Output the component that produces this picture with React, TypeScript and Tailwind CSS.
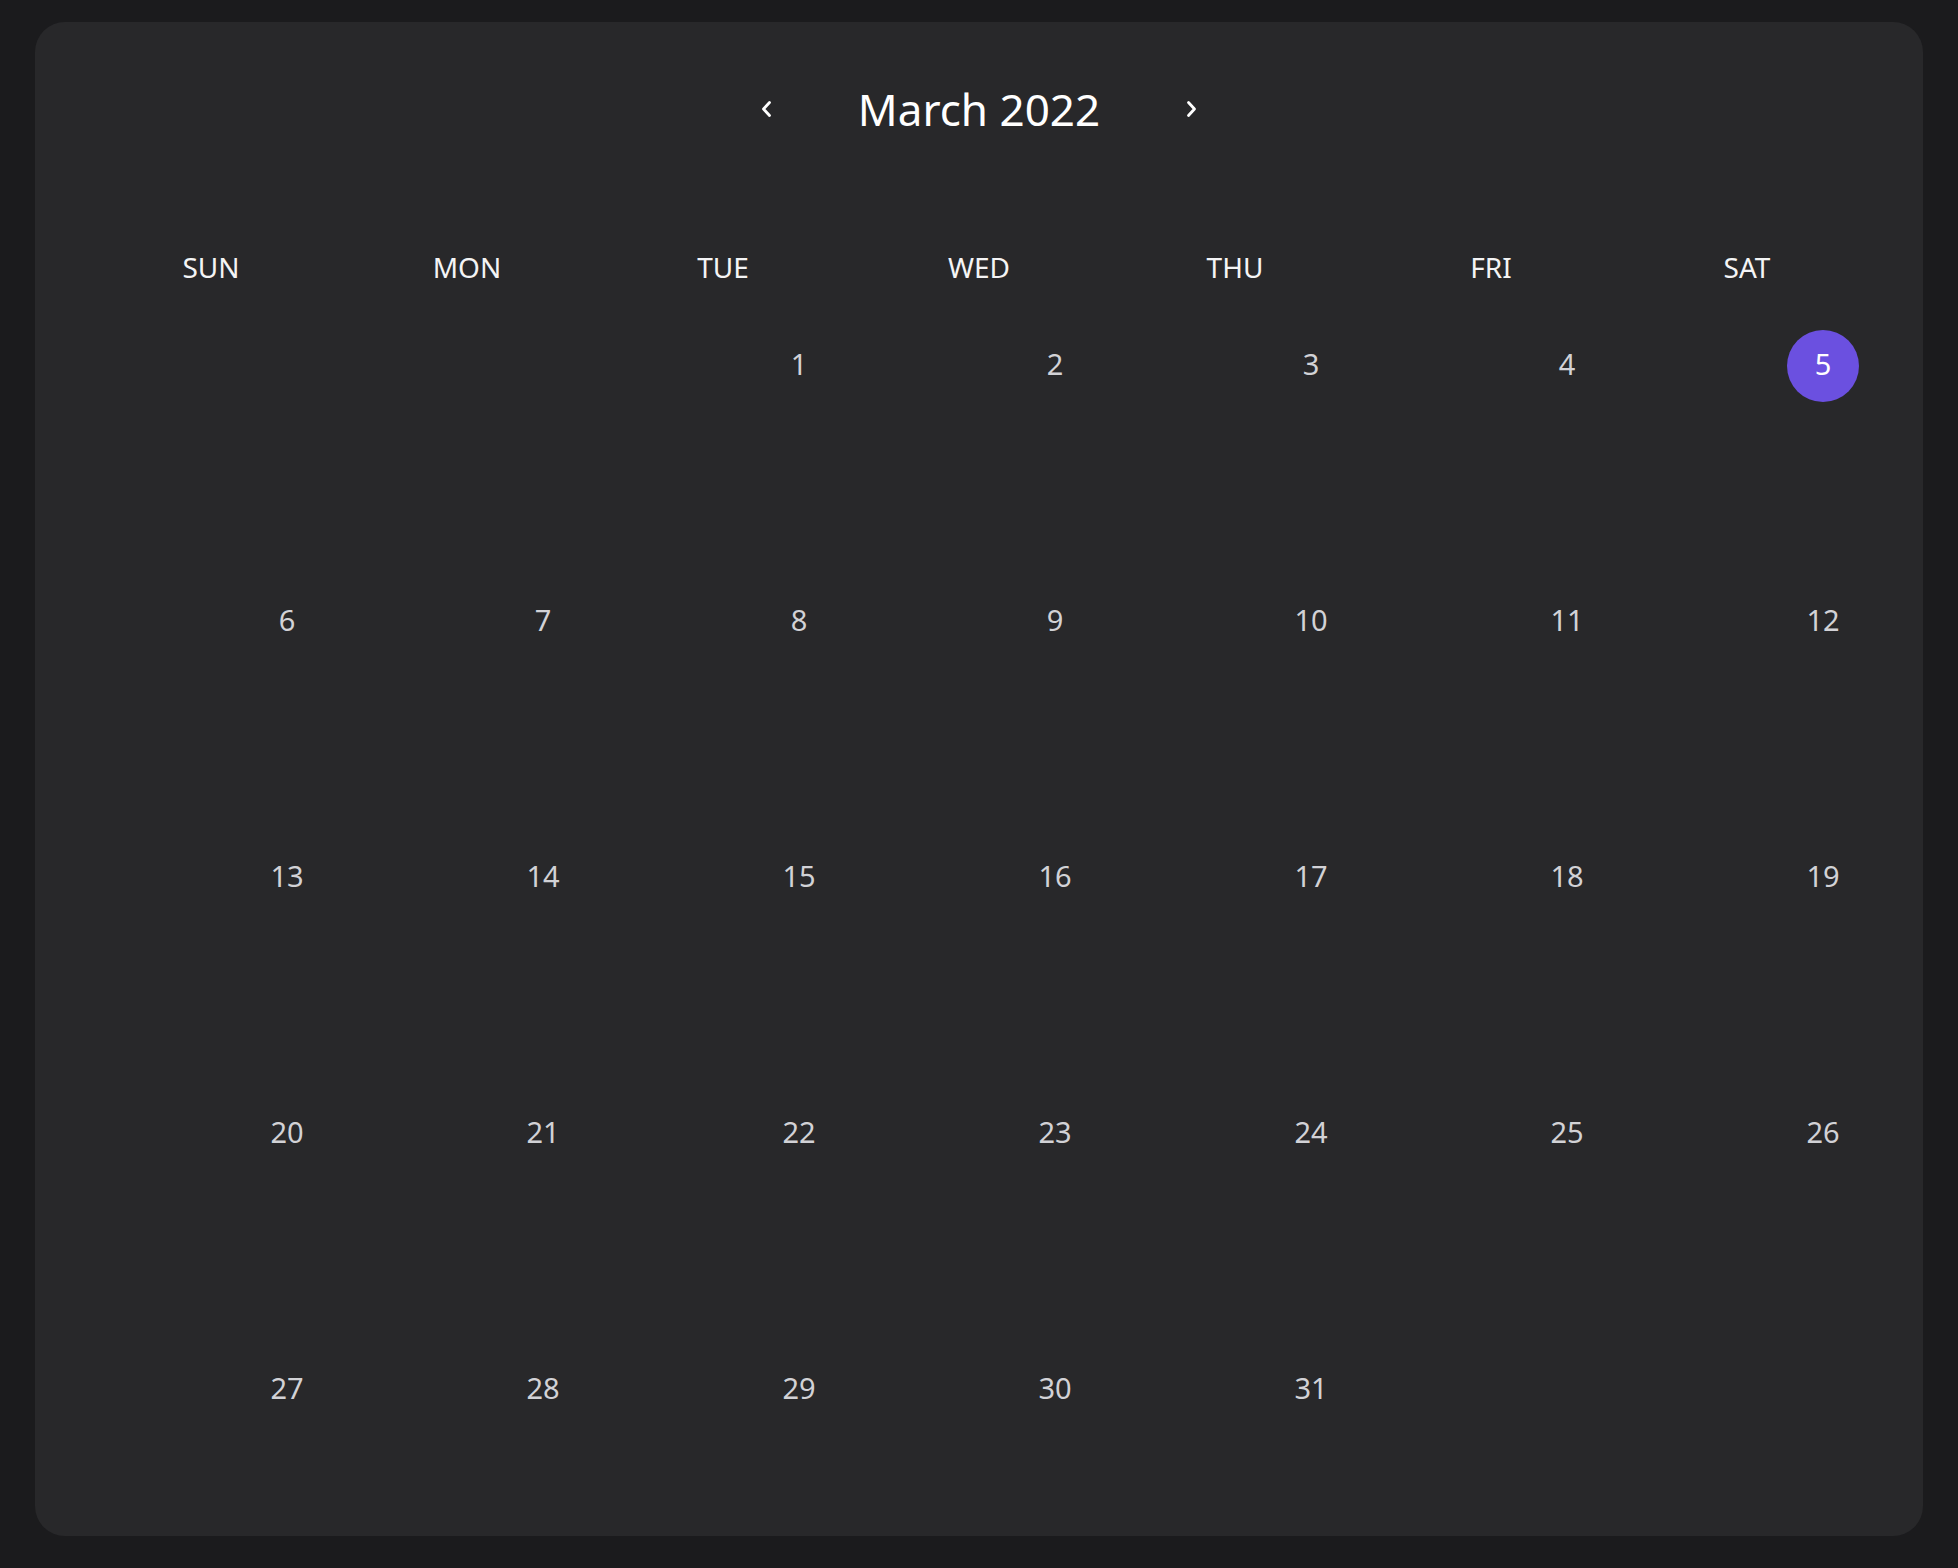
import React from 'react';

const days = ['SUN', 'MON', 'TUE', 'WED', 'THU', 'FRI', 'SAT'];

const weeks: (number | null)[][] = [
  [null, null, 1, 2, 3, 4, 5],
  [6, 7, 8, 9, 10, 11, 12],
  [13, 14, 15, 16, 17, 18, 19],
  [20, 21, 22, 23, 24, 25, 26],
  [27, 28, 29, 30, 31, null, null],
];

const Chevron = ({ dir }: { dir: 'left' | 'right' }) => (
  <svg width="12" height="18" viewBox="0 0 12 18" fill="none">
    <path
      d={dir === 'left' ? 'M9.5 2.5 L3.5 9 L9.5 15.5' : 'M2.5 2.5 L8.5 9 L2.5 15.5'}
      stroke="#ffffff"
      strokeWidth="2.8"
      strokeLinecap="round"
      strokeLinejoin="round"
    />
  </svg>
);

const App = () => {
  const selected = 5;

  return (
    <div
      className="h-[1568px] w-full overflow-hidden bg-[#1b1b1d] px-[35px] pt-[22px]"
      style={{ fontFamily: '"Noto Sans", "Open Sans", sans-serif' }}
    >
      <div className="h-[1514px] overflow-hidden rounded-[30px] bg-[#28282a] px-12 pt-12">
        <div className="flex h-[78px] items-center justify-center gap-[86px]">
          <button className="flex w-[12px] items-center">
            <Chevron dir="left" />
          </button>
          <h1 className="text-[44px] leading-none text-white">March 2022</h1>
          <button className="flex w-[12px] items-center">
            <Chevron dir="right" />
          </button>
        </div>

        <div className="mt-[99px] grid h-10 grid-cols-7 items-center">
          {days.map((d) => (
            <div key={d} className="text-center text-[28px] leading-10 text-[#f4f4f5]">
              {d}
            </div>
          ))}
        </div>

        <div className="mt-[27px] grid grid-cols-7">
          {weeks.flat().map((n, i) => (
            <div key={i} className="flex h-[256px] items-start justify-end pr-4 pt-4">
              {n !== null && (
                <div
                  className={
                    n === selected
                      ? 'flex h-[72px] w-[72px] items-center justify-center rounded-full bg-[#6b50e0] pb-1 text-[29px] text-white'
                      : 'flex h-[72px] w-[72px] items-center justify-center pb-1 text-[29px] text-[#d2d2d6]'
                  }
                >
                  {n}
                </div>
              )}
            </div>
          ))}
        </div>
      </div>
    </div>
  );
};

export default App;
